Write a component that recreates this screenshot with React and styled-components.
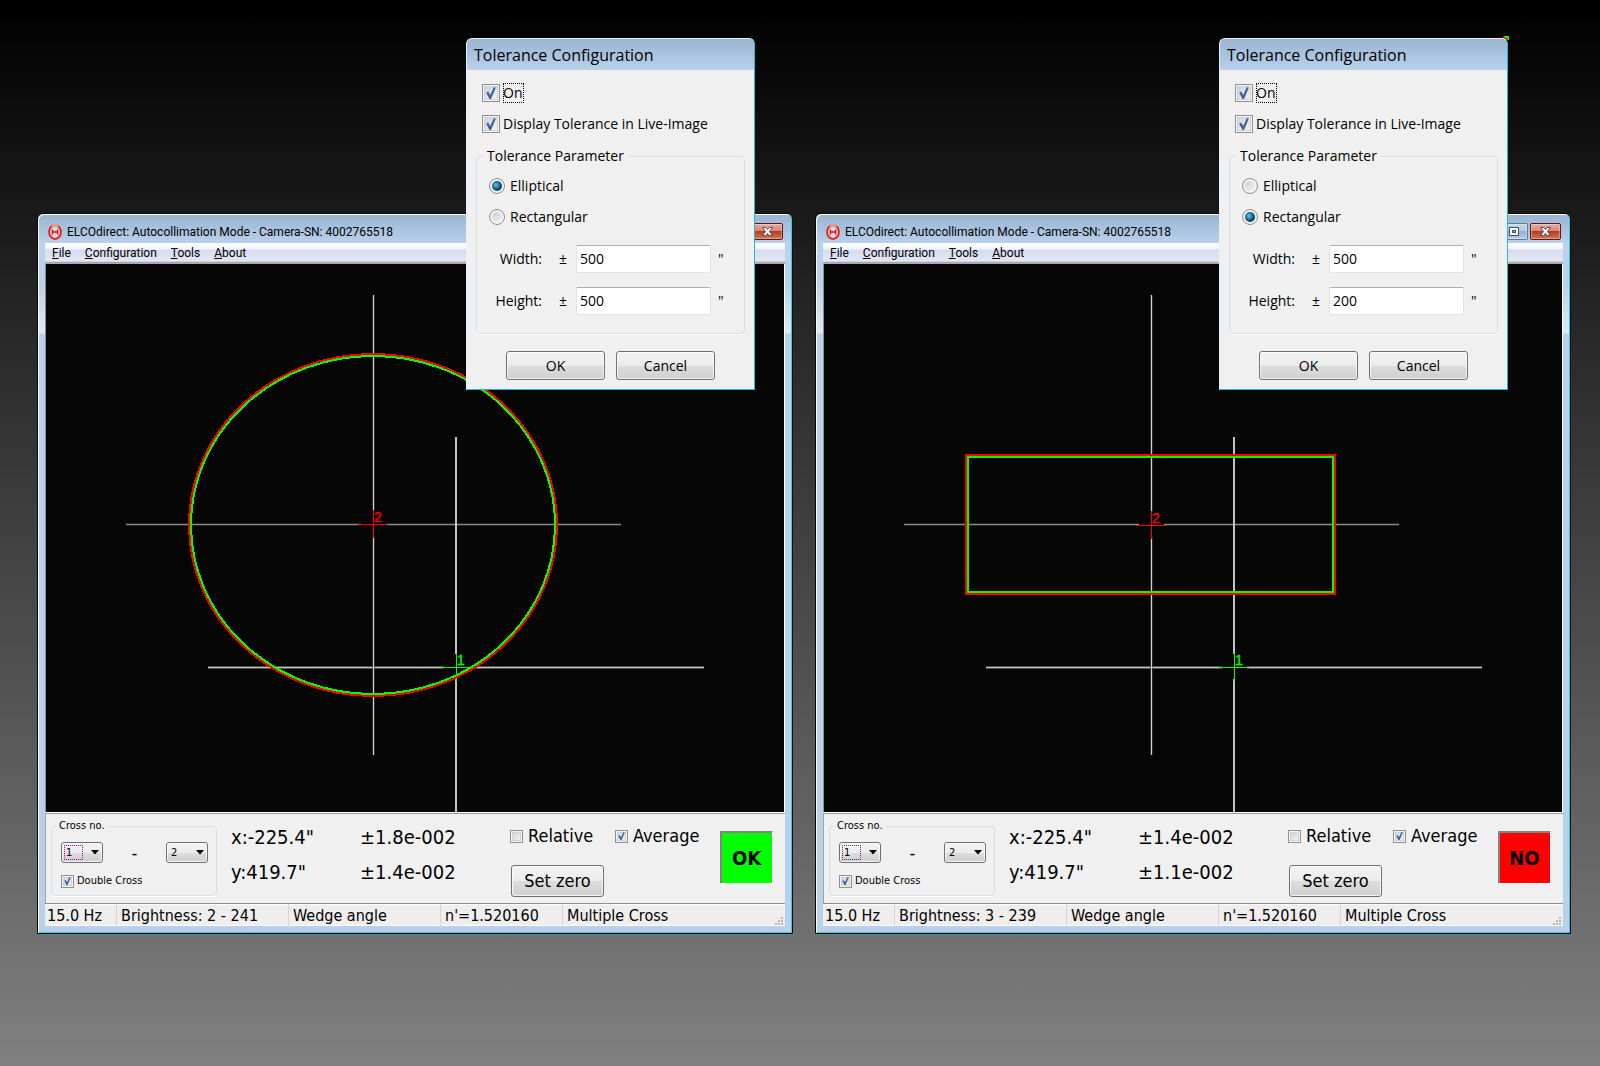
import React from "react";
import styled, { createGlobalStyle, css } from "styled-components";

const tahoma = '"DejaVu Sans Condensed", "DejaVu Sans", sans-serif';
const segoe = '"Open Sans", "Noto Sans", sans-serif';
const caption = "Roboto, sans-serif";

const GlobalStyle = createGlobalStyle`
  *, *::before, *::after { box-sizing: border-box; }
  body { margin: 0; background: #000; color: #000; font-family: ${tahoma}; }
  button, input, select { font: inherit; color: inherit; margin: 0; padding: 0; }
`;

const Desktop = styled.main`
  min-height: 100vh;
  padding: 213px 29px 40px 37px;
  background: linear-gradient(#000, #808080);
  display: grid;
  grid-template-columns: 1fr 1fr;
  gap: 22px;
  align-items: start;
`;

const Station = styled.div`
  position: relative;
  min-width: 0;
`;

/* ---------- main window ---------- */

const Window = styled.section`
  border: 1px solid #05080a;
  border-radius: 6px 6px 0 0;
  padding: 1px 7px 7px;
  background: linear-gradient(#98b4d1 0, #b9d1ea 29px, #b9d1ea 70px, #dfe9f5 119px, #b9d0ea 120px);
  box-shadow: inset 1px 1px 0 #fff, inset -1px -1px 0 #28cde8;
`;

const TitleBar = styled.header`
  height: 28px;
  display: flex;
  align-items: center;
  gap: 5px;
  padding: 5px 2px 0 3px;
`;

const WindowTitle = styled.h1`
  margin: 0;
  flex: 1;
  font: 400 12px/20px ${caption};
  white-space: nowrap;
`;

const CaptionButtons = styled.div`
  display: flex;
  gap: 2px;
  padding-bottom: 1px;
`;

const CaptionButton = styled.button`
  display: grid;
  place-items: center;
  width: ${(p) => (p.$close ? 31 : 27)}px;
  height: 17px;
  border: 1px solid ${(p) => (p.$close ? "#5b1520" : "#5f7a98")};
  border-radius: 2px;
  background: ${(p) =>
    p.$close
      ? "linear-gradient(#e9aa9d 0, #d98474 48%, #b83a25 50%, #cf7a4c 100%)"
      : "linear-gradient(#c3d6ea 0, #b3cae3 48%, #94b0cf 50%, #b4cde6 100%)"};
  box-shadow: inset 0 0 0 1px rgba(255, 255, 255, 0.35);
`;

const Client = styled.div`
  background: #f0f0f0;
`;

const MenuBar = styled.nav`
  height: 21px;
  display: flex;
  align-items: flex-start;
  gap: 14px;
  padding: 0 7px;
  background: linear-gradient(#fff 0, #f1f4fb 6px, #d6dcef 7px, #e2e6f6 18px, #fff 18px, #a9a9ad 19px);
`;

const MenuItem = styled.button`
  border: 0;
  background: none;
  font: 400 12px/20px ${caption};
`;

const Viewport = styled.svg`
  display: block;
  width: 100%;
  height: auto;
  background: #060606;
  border-left: 1px solid #8e8e92;
  border-right: 1px solid #fff;
`;

const Panel = styled.div`
  display: grid;
  grid-template-columns: 166px 129px 149px 1fr auto;
  align-items: start;
  padding: 5px 12px 6px 6px;
  border-top: 1px solid #fff;
  box-shadow: inset 0 1px 0 #9a9a9a, inset 1px 0 0 #a2a2a2;
`;

const groupFrame = css`
  margin: 0;
  min-width: 0;
  border: 1px solid #d5dfe5;
  border-radius: 4px;
  box-shadow: 0 1px 0 #fff;
`;

const CrossGroup = styled.fieldset`
  ${groupFrame}
  padding: 8px 8px 6px 9px;
  font-size: 11px;
  line-height: 16px;
`;

const CrossLegend = styled.legend`
  padding: 0 3px;
  margin-left: -5px;
`;

const CrossSelects = styled.div`
  display: flex;
  align-items: center;
  justify-content: space-between;
  margin-bottom: 10px;
`;

const SelectBox = styled.span`
  display: grid;
  align-items: center;
  width: 42px;
  height: 21px;
  > * { grid-area: 1 / 1; }
  > svg { justify-self: end; margin-right: 4px; pointer-events: none; }
`;

const buttonFace = css`
  border: 1px solid #707070;
  border-radius: 3px;
  background: linear-gradient(#f3f3f3 0, #ebebeb 50%, #dddddd 51%, #cfcfcf 100%);
  box-shadow: inset 0 0 0 1px rgba(255, 255, 255, 0.75);
`;

const Select = styled.select`
  ${buttonFace}
  appearance: none;
  width: 42px;
  height: 21px;
  padding-left: 4px;
  line-height: 17px;
`;

const FocusRect = styled.span`
  width: 19px;
  height: 15px;
  margin-left: 3px;
  border: 1px dotted ${(p) => p.$tone};
  pointer-events: none;
`;

const Dash = styled.span`
  font-size: 18px;
`;

const tick = css`
  &:checked::before {
    content: "";
    width: 60%;
    height: 75%;
    background: #44609f;
    clip-path: polygon(0 48%, 20% 38%, 42% 66%, 80% 0, 100% 6%, 50% 100%, 34% 100%);
  }
`;

const CheckBox = styled.input.attrs({ type: "checkbox" })`
  appearance: none;
  flex: none;
  display: grid;
  place-items: center;
  width: ${(p) => p.$size}px;
  height: ${(p) => p.$size}px;
  border: 1px solid #8e8f8f;
  background: linear-gradient(135deg, #c9cfd6, #f6f6f6);
  box-shadow: inset 0 0 0 1px #f4f4f4, inset 0 0 0 2px #cdd1d8;
  ${tick}
`;

const Radio = styled.input.attrs({ type: "radio" })`
  appearance: none;
  flex: none;
  display: grid;
  place-items: center;
  width: 16px;
  height: 16px;
  border: 1px solid #8e8f8f;
  border-radius: 50%;
  background: linear-gradient(135deg, #c4c8cc, #f8f8f8);
  box-shadow: inset 0 0 0 2px #f4f4f4;
  &:checked::before {
    content: "";
    width: 10px;
    height: 10px;
    border-radius: 50%;
    background: radial-gradient(circle at 40% 40%, #5fc8ea 0, #1c6f98 40%, #0c2b45 75%);
  }
`;

const Check = styled.label`
  display: flex;
  align-items: center;
  gap: ${(p) => p.$gap}px;
  white-space: nowrap;
`;

const Readout = styled.div`
  display: grid;
  grid-auto-rows: 35px;
  align-items: center;
  padding-left: 14px;
  padding-top: 1px;
  font-size: 20px;
  line-height: 26px;
  white-space: nowrap;
`;

const Controls = styled.div`
  display: grid;
  justify-items: start;
  row-gap: 16px;
  padding: 5px 0 0 15px;
  font-size: 18px;
  line-height: 26px;
`;

const CheckRow = styled.div`
  display: grid;
  grid-template-columns: 105px auto;
`;

const ZeroButton = styled.button`
  ${buttonFace}
  width: 93px;
  height: 32px;
  margin-left: 1px;
`;

const Verdict = styled.output`
  display: grid;
  place-items: center;
  width: 53px;
  height: 53px;
  margin-top: 13px;
  background: ${(p) => p.$color};
  border: 1px solid;
  border-color: #808080 #fff #fff #808080;
  box-shadow: inset 1px 1px 0 #7c8a7c;
  font: 700 20px/26px ${tahoma};
`;

const StatusBar = styled.footer`
  display: grid;
  grid-template-columns: 71px 172px 152px 122px 1fr auto;
  height: 23px;
  border-top: 1px solid #8e8e8e;
  background: #f0eded;
  box-shadow: inset 0 1px 0 #fff, inset 0 -1px 0 #fff;
  font-size: 16px;
  line-height: 24px;
`;

const StatusCell = styled.span`
  padding-left: ${(p) => (p.$first ? 2 : 4)}px;
  border-left: ${(p) => (p.$first ? 0 : 1)}px solid #d7d5d5;
  white-space: nowrap;
`;

const Grip = styled.svg`
  align-self: end;
  margin: 0 1px 2px 0;
`;

/* ---------- tolerance dialog ---------- */

const Dialog = styled.section`
  position: absolute;
  top: -175px;
  left: ${(p) => p.$left}px;
  width: 289px;
  padding: 1px 1px 2px;
  border-radius: 6px 6px 0 0;
  border: 1px solid;
  border-color: #e6f0f8 #23b9d6 #23b9d6 #e6f0f8;
  background: #f0f0f0;
  font: 400 14px/20px ${segoe};
`;

const DialogTitle = styled.h2`
  margin: -1px -1px 0;
  height: 31px;
  padding: 0 7px;
  border-radius: 5px 5px 0 0;
  background: linear-gradient(#9ab5d2, #b9d1ea);
  font: 400 16px/32px ${segoe};
`;

const DialogBody = styled.div`
  padding: 13px 8px 7px;
`;

const Options = styled.div`
  display: grid;
  gap: 11px;
  padding-left: ${(p) => p.$inset}px;
`;

const FocusText = styled.span`
  outline: ${(p) => (p.$focused ? "1px dotted #000" : "none")};
  outline-offset: -1px;
  padding-right: 2px;
`;

const ParameterGroup = styled.fieldset`
  ${groupFrame}
  margin-top: 12px;
  padding: 10px 12px 18px;
`;

const ParameterLegend = styled.legend`
  padding: 0 4px;
  margin-left: -6px;
`;

const Fields = styled.div`
  display: grid;
  grid-template-columns: 53px 34px 135px auto;
  row-gap: 14px;
  align-items: center;
  margin-top: 18px;
`;

const FieldLabel = styled.label`
  text-align: right;
`;

const Sign = styled.span`
  padding-left: 17px;
`;

const Unit = styled.span`
  padding-left: 7px;
`;

const TextBox = styled.input.attrs({ type: "text" })`
  width: 100%;
  height: 28px;
  padding: 0 3px 2px;
  border: 1px solid #e2e3ea;
  border-top-color: #abadb3;
  border-radius: 2px;
  background: #fff;
`;

const DialogButtons = styled.div`
  display: flex;
  gap: 11px;
  margin: 17px 0 0 30px;
`;

const DialogButton = styled.button`
  ${buttonFace}
  width: 99px;
  height: 29px;
`;

const CornerMark = styled.span`
  position: absolute;
  top: -177px;
  left: ${(p) => p.$left}px;
  width: 6px;
  height: 4px;
  background: linear-gradient(to top right, #f00 50%, #0f0 50%);
`;

/* ---------- drawings ---------- */

const Logo = () => (
  <svg width="14" height="16" viewBox="0 0 14 16" aria-hidden="true">
    <ellipse cx="7" cy="8" rx="5.9" ry="7" fill="#cfd6e2" stroke="#e2231a" strokeWidth="1.9" />
    <path d="M3.6 2.2A6 7 0 0 1 10.4 2.2" fill="none" stroke="#f0a08c" strokeWidth="2" />
    <path d="M4.4 5.4v5.2M9.6 5.4v5.2M4.4 8h5.2" fill="none" stroke="#d8140f" strokeWidth="1.4" />
  </svg>
);

const Arrow = () => (
  <svg width="8" height="5" viewBox="0 0 8 5" aria-hidden="true">
    <path d="M0 0h8L4 4.6z" fill="#000" />
  </svg>
);

const CaptionIcon = ({ kind }) => (
  <svg width="13" height="11" viewBox="0 0 13 11" aria-hidden="true">
    <g fill="#fff" stroke="#47526b" strokeWidth="1">
      {kind === "min" && <rect x="2.5" y="6.5" width="8" height="3" />}
      {kind === "max" && (
        <>
          <rect x="1.5" y="1.5" width="9" height="8" />
          <rect x="4.5" y="4.5" width="3" height="2" fill="#8fa6c4" />
        </>
      )}
      {kind === "close" && <path d="M1.5 1.5h3.2l1.8 2 1.8-2h3.2L8.4 5.5l3.1 4H8.3l-1.8-2-1.8 2H1.5l3.1-4z" />}
    </g>
  </svg>
);

const SizeGrip = () => (
  <Grip width="9" height="9" viewBox="0 0 9 9" aria-hidden="true" fill="#b8b4b4">
    {[[6, 0], [3, 3], [6, 3], [0, 6], [3, 6], [6, 6]].map(([x, y]) => (
      <rect key={`${x}-${y}`} x={x} y={y} width="2" height="2" />
    ))}
  </Grip>
);

const Marker = ({ x, y, color, label }) => (
  <g>
    <rect x={x - 12} y={y - 13} width="25" height="25" fill="#060606" />
    <path d={`M${x - 15} ${y + 0.5}h30M${x + 0.5} ${y - 14}v28`} stroke={color} fill="none" />
    <text x={x + 1} y={y - 2} fill={color} stroke={color} strokeWidth="0.3" fontFamily="Liberation Sans, sans-serif" fontSize="14">
      {label}
    </text>
  </g>
);

const LiveImage = ({ shape }) => (
  <Viewport viewBox="0 0 738 548" role="img" aria-label="Live image">
    <g fill="none">
      <path d="M80 260.5h495" stroke="#474747" strokeWidth="2" />
      <path d="M80 260.5h495" stroke="#8c8c8c" />
      <path d="M162 403.5h496" stroke="#4c4c4c" strokeWidth="3" />
      <path d="M162 403.5h496" stroke="#c8c8c8" />
      <path d="M327.5 31v460" stroke="#4a4a4a" strokeWidth="2" />
      <path d="M327.5 31v460" stroke="#d2d2d2" />
      <path d="M410 173v375" stroke="#c2c2c2" strokeWidth="2" />
    </g>
    <Marker x={327} y={shape === "elliptical" ? 260 : 261} color="#f00" label="2" />
    <Marker x={410} y={403} color="#0f0" label="1" />
    <g fill="none" strokeWidth="2" shapeRendering="crispEdges">
      {shape === "elliptical" ? (
        <>
          <ellipse cx="327" cy="261" rx="184" ry="171" stroke="#f00" />
          <ellipse cx="327" cy="261" rx="182" ry="169" stroke="#0f0" />
        </>
      ) : (
        <>
          <rect x="142" y="191" width="369" height="139" stroke="#f00" />
          <rect x="144" y="193" width="365" height="135" stroke="#0f0" />
        </>
      )}
    </g>
  </Viewport>
);

/* ---------- parts ---------- */

const CrossSelect = ({ name, value, focusTone }) => (
  <SelectBox>
    <Select aria-label={name} defaultValue={value}>
      <option>1</option>
      <option>2</option>
    </Select>
    {focusTone && <FocusRect $tone={focusTone} />}
    <Arrow />
  </SelectBox>
);

const MainWindow = ({ station }) => (
  <Window>
    <TitleBar>
      <Logo />
      <WindowTitle>ELCOdirect: Autocollimation Mode - Camera-SN: 4002765518</WindowTitle>
      <CaptionButtons>
        <CaptionButton aria-label="Minimize"><CaptionIcon kind="min" /></CaptionButton>
        <CaptionButton aria-label="Maximize"><CaptionIcon kind="max" /></CaptionButton>
        <CaptionButton $close aria-label="Close"><CaptionIcon kind="close" /></CaptionButton>
      </CaptionButtons>
    </TitleBar>
    <Client>
      <MenuBar>
        {["File", "Configuration", "Tools", "About"].map((item) => (
          <MenuItem key={item}><u>{item[0]}</u>{item.slice(1)}</MenuItem>
        ))}
      </MenuBar>
      <LiveImage shape={station.shape} />
      <Panel>
        <CrossGroup>
          <CrossLegend>Cross no.</CrossLegend>
          <CrossSelects>
            <CrossSelect name="First cross" value="1" focusTone={station.focusTone} />
            <Dash>-</Dash>
            <CrossSelect name="Second cross" value="2" />
          </CrossSelects>
          <Check $gap={3}>
            <CheckBox $size={13} defaultChecked />
            Double Cross
          </Check>
        </CrossGroup>
        <Readout>
          <span>x:-225.4"</span>
          <span>y:419.7"</span>
        </Readout>
        <Readout>
          {station.deviations.map((d) => <span key={d}>{d}</span>)}
        </Readout>
        <Controls>
          <CheckRow>
            <Check $gap={5}><CheckBox $size={13} />Relative</Check>
            <Check $gap={5}><CheckBox $size={13} defaultChecked />Average</Check>
          </CheckRow>
          <ZeroButton>Set zero</ZeroButton>
        </Controls>
        <Verdict $color={station.verdictColor}>{station.verdict}</Verdict>
      </Panel>
      <StatusBar>
        {["15.0 Hz", station.brightness, "Wedge angle", "n'=1.520160", "Multiple Cross"].map((text, i) => (
          <StatusCell key={text} $first={i === 0}>{text}</StatusCell>
        ))}
        <SizeGrip />
      </StatusBar>
    </Client>
  </Window>
);

const ToleranceDialog = ({ station }) => {
  const { id, shape, width, height, dialogLeft } = station;
  return (
    <Dialog $left={dialogLeft} role="dialog" aria-label="Tolerance Configuration">
      <DialogTitle>Tolerance Configuration</DialogTitle>
      <DialogBody>
        <Options $inset={6}>
          <Check $gap={3}>
            <CheckBox $size={18} defaultChecked />
            <FocusText $focused>On</FocusText>
          </Check>
          <Check $gap={3}>
            <CheckBox $size={18} defaultChecked />
            <FocusText>Display Tolerance in Live-Image</FocusText>
          </Check>
        </Options>
        <ParameterGroup>
          <ParameterLegend>Tolerance Parameter</ParameterLegend>
          <Options $inset={0}>
            <Check $gap={5}>
              <Radio name={`${id}-shape`} defaultChecked={shape === "elliptical"} />
              Elliptical
            </Check>
            <Check $gap={5}>
              <Radio name={`${id}-shape`} defaultChecked={shape === "rectangular"} />
              Rectangular
            </Check>
          </Options>
          <Fields>
            <FieldLabel htmlFor={`${id}-width`}>Width:</FieldLabel>
            <Sign>±</Sign>
            <TextBox id={`${id}-width`} defaultValue={width} />
            <Unit>"</Unit>
            <FieldLabel htmlFor={`${id}-height`}>Height:</FieldLabel>
            <Sign>±</Sign>
            <TextBox id={`${id}-height`} defaultValue={height} />
            <Unit>"</Unit>
          </Fields>
        </ParameterGroup>
        <DialogButtons>
          <DialogButton>OK</DialogButton>
          <DialogButton>Cancel</DialogButton>
        </DialogButtons>
      </DialogBody>
    </Dialog>
  );
};

const stations = [
  {
    id: "left",
    shape: "elliptical",
    width: "500",
    height: "500",
    deviations: ["±1.8e-002", "±1.4e-002"],
    brightness: "Brightness: 2 - 241",
    verdict: "OK",
    verdictColor: "#00ff00",
    focusTone: "#b000b0",
    dialogLeft: 429,
  },
  {
    id: "right",
    shape: "rectangular",
    width: "500",
    height: "200",
    deviations: ["±1.4e-002", "±1.1e-002"],
    brightness: "Brightness: 3 - 239",
    verdict: "NO",
    verdictColor: "#ff0000",
    focusTone: "#5a2a6a",
    dialogLeft: 404,
    cornerMark: 688,
  },
];

export default function App() {
  return (
    <>
      <GlobalStyle />
      <Desktop>
        {stations.map((station) => (
          <Station key={station.id}>
            <MainWindow station={station} />
            {station.cornerMark && <CornerMark $left={station.cornerMark} />}
            <ToleranceDialog station={station} />
          </Station>
        ))}
      </Desktop>
    </>
  );
}
